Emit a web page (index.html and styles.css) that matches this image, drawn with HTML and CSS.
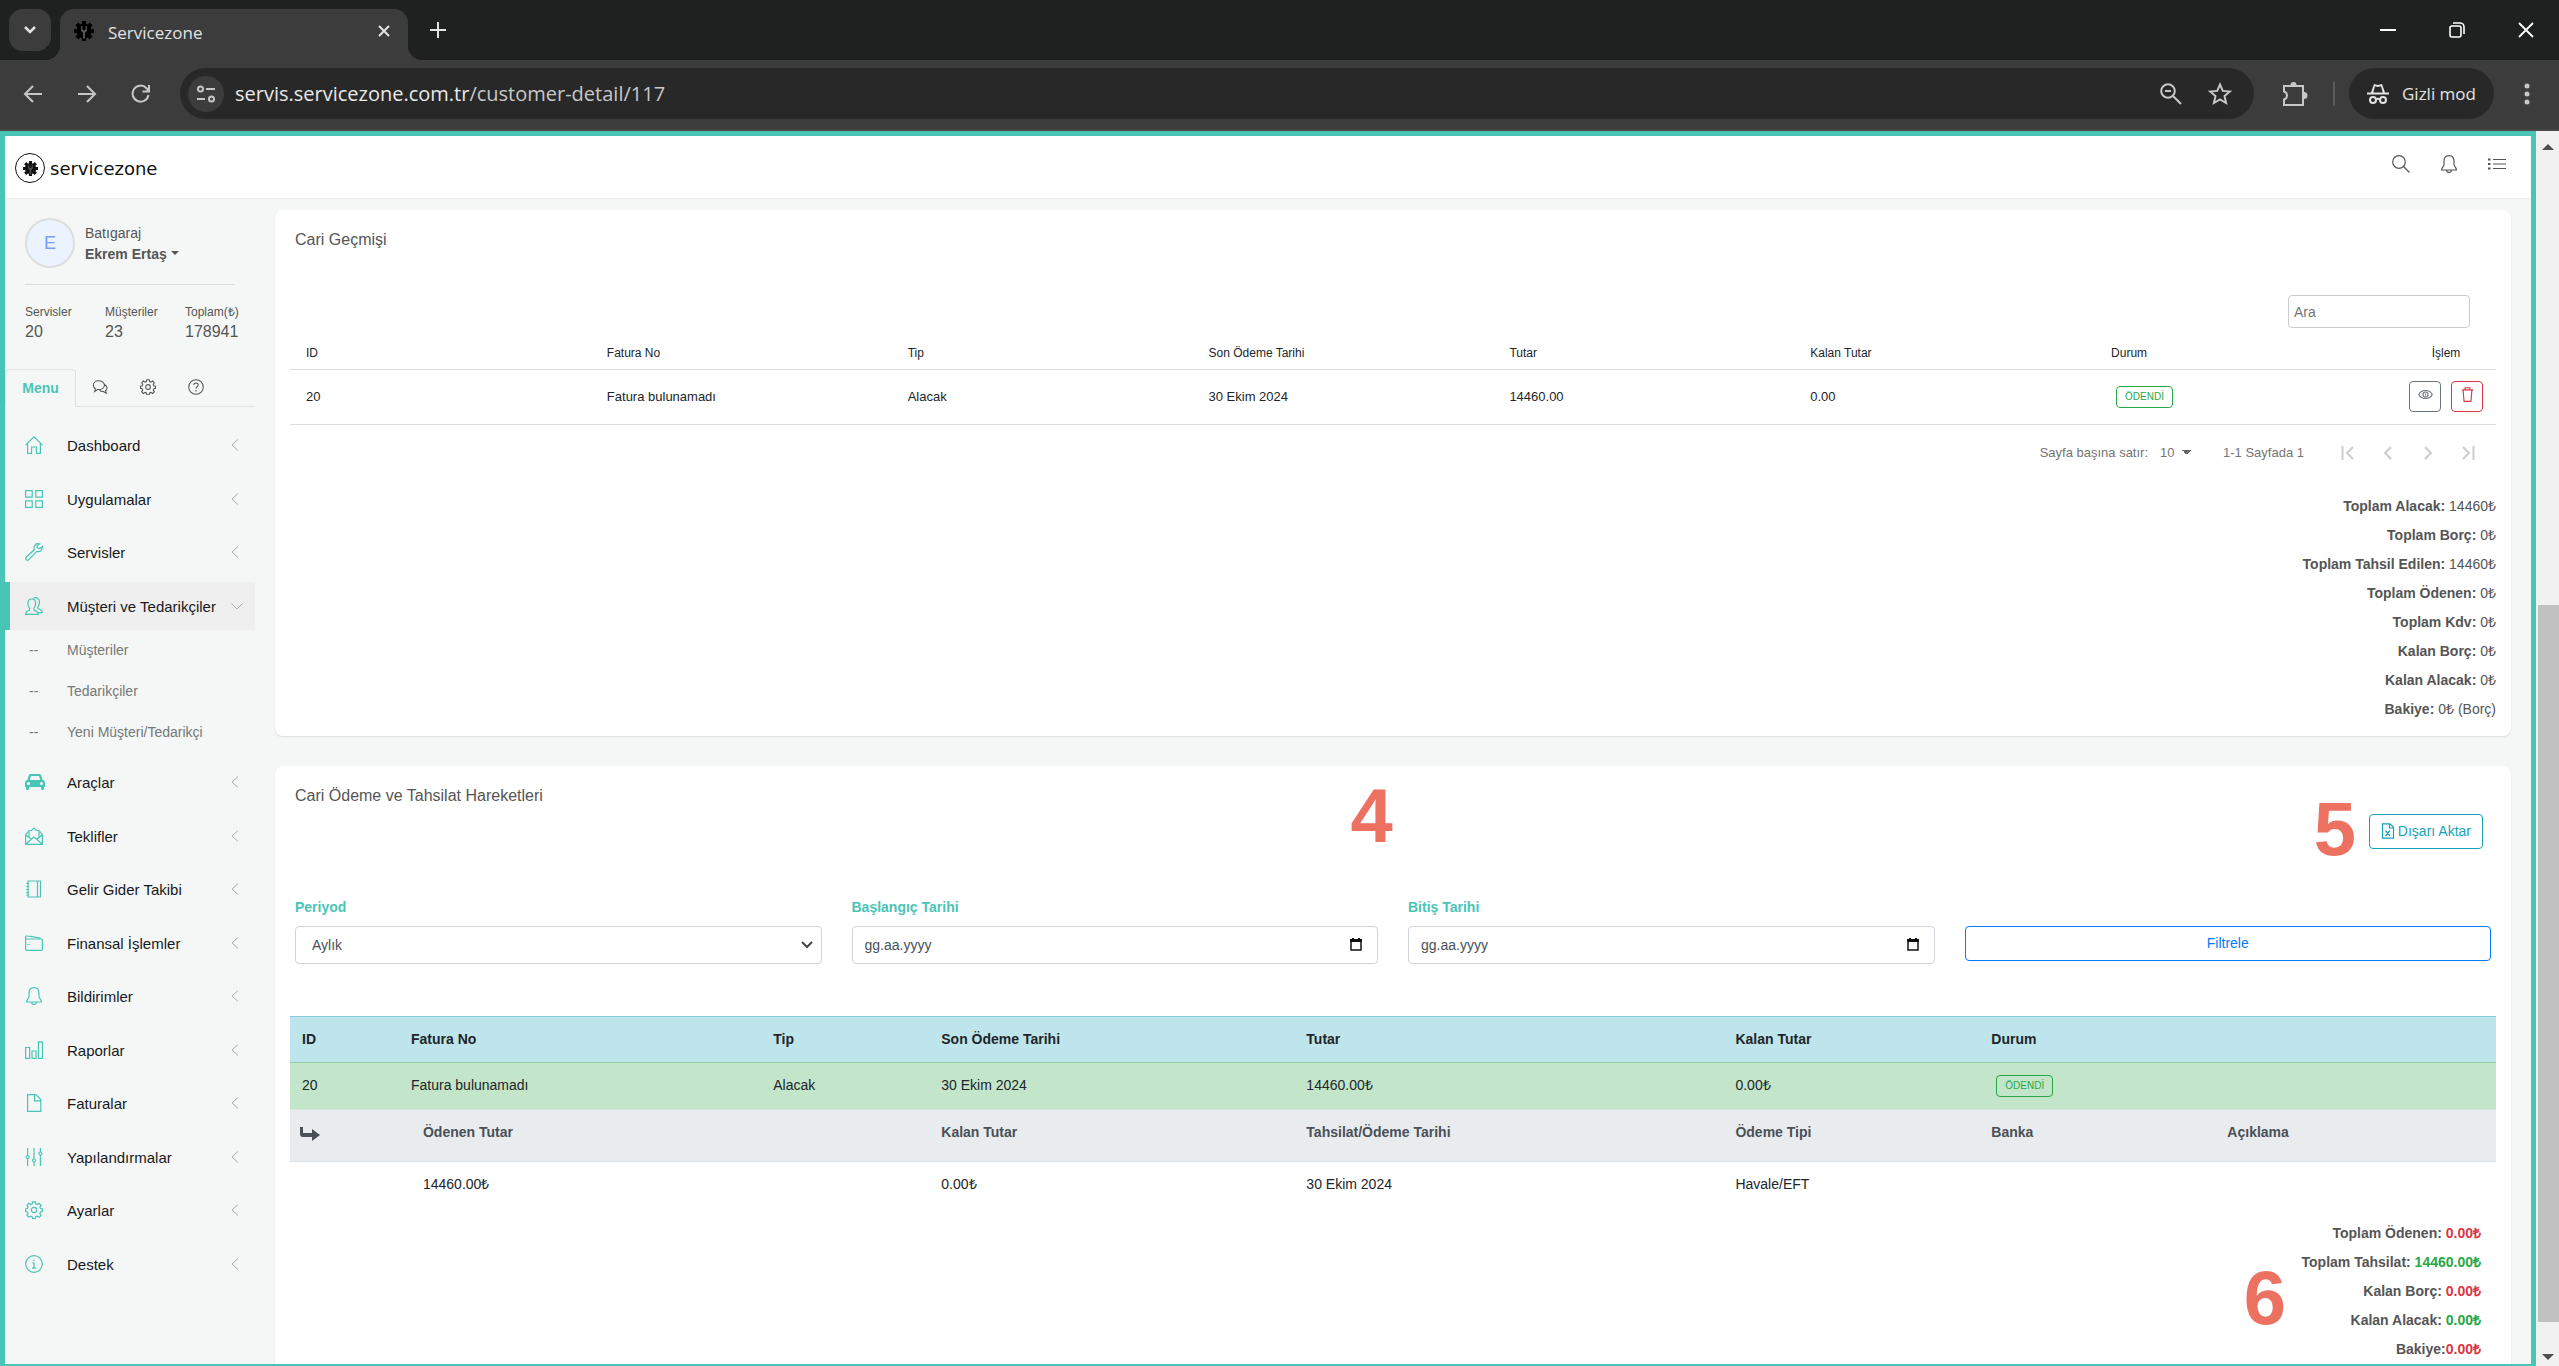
FILE: index.html
```html
<!DOCTYPE html>
<html lang="tr">
<head>
  <meta charset="UTF-8">
  <meta name="viewport" content="width=device-width, initial-scale=1">
  <title>Servicezone</title>
  <link rel="stylesheet" href="styles.css">
</head>
<body>
  <!-- Icon set -->
  <svg class="icon-set" aria-hidden="true">
    <symbol id="i-gearlogo" viewBox="0 0 24 24">
      <g fill="currentColor">
        <circle cx="12" cy="12" r="9"/>
        <path d="M9.500 0h5v24h-5zM0 9.500h24v5H0z"/>
        <path d="M9.500 0h5v24h-5zM0 9.500h24v5H0z" transform="rotate(45 12 12)"/>
      </g>
      <path class="logo-wrench" d="M8.500 6v6l2.300 2.200V21h2.400v-6.800l2.300-2.200V6h-1.500v4L12 11.500 10 10V6z"/>
    </symbol>
    <symbol id="i-search" viewBox="0 0 18 18"><circle cx="7" cy="7" r="6.300"/><path d="M11.500 11.500l6 6"/></symbol>
    <symbol id="i-bell" viewBox="0 0 18 18"><path d="M9 .6C5.800.6 4 2.800 4 6v3.500c0 2-2.400 3-2.400 5.500h14.800c0-2.500-2.400-3.500-2.400-5.500V6C14 2.800 12.200.6 9 .6zM6.600 15.200c0 3 4.800 3 4.800 0"/></symbol>
    <symbol id="i-list" viewBox="0 0 18 18"><path d="M5 4.500h13M5 9h13M5 13.500h13"/><path stroke-width="2" d="M0 4.500h2.500M0 9h2.500M0 13.500h2.500"/></symbol>
    <symbol id="i-bubbles" viewBox="0 0 18 18"><path d="M7.500 2C4 2 1.500 4.300 1.500 7c0 1.700.9 3.100 2.300 4L3 14l3.200-2.200c4.500.6 7.800-1.600 7.800-4.800 0-2.700-2.800-5-6.500-5zM14 6.200c3.600 1.700 3.600 5.300 1.200 6.900l.8 2.700-3.200-1.800c-1.700.3-3.300-.2-4.300-1.500"/></symbol>
    <symbol id="i-gear" viewBox="0 0 18 18"><circle cx="9" cy="9" r="2.700"/><path d="M7.600.8h2.800l.4 2.100 1.500.6 1.800-1.200 2 2-1.200 1.800.6 1.500 1.900.4v2.500l-1.900.5-.6 1.500 1.200 1.800-2 2-1.800-1.200-1.500.6-.4 2H7.600l-.4-2-1.500-.6-1.800 1.200-2-2 1.200-1.800-.6-1.500L.6 10.500V8l1.900-.4.6-1.500-1.200-1.800 2-2 1.800 1.200 1.500-.6z"/></symbol>
    <symbol id="i-help" viewBox="0 0 18 18"><circle cx="9" cy="9" r="8.200"/><path d="M6.500 6.800c0-3.200 5-3 5 0 0 1.900-2.500 1.800-2.500 4M9 12.500v1.500"/></symbol>
    <symbol id="i-home" viewBox="0 0 18 18"><path d="M.6 9.200L9 .8l8.400 8.400M2.600 7.500v9.900h4V11h4.800v6.400h4V7.500"/></symbol>
    <symbol id="i-grid" viewBox="0 0 18 18"><path d="M.6.6h6.600v6.600H.6zM10.800.6h6.600v6.600h-6.600zM.6 10.800h6.600v6.600H.6zM10.800 10.800h6.600v6.600h-6.600z"/></symbol>
    <symbol id="i-wrench" viewBox="0 0 18 18"><path d="M14.700 1c-2-.8-4.200-.2-5.200 1.800-.7 1.300-.6 2.600-.1 3.700L1 14.500c-.7 1 0 2.700 1.500 2.800.6 0 1-.3 1.300-.6l8-8.300c2.800.9 5.900-1.200 5.600-4.900l-2.700 2.200-2.200-.6-.6-2z"/></symbol>
    <symbol id="i-users" viewBox="0 0 18 18"><path d="M.6 17.400c0-3 2-3.500 4-4.400v-1.500C3.300 10 2.800 8 2.900 5.800 3 3.500 4.500 2 6.700 2s3.800 1.500 3.900 3.800c.1 2.200-.5 4.200-1.700 5.700V13c2 .9 4.300 1.400 4.300 4.400zM8.300 1.200c3.400-1.600 6.300.5 6.200 3.800 0 2.300-.5 3.700-1.700 5.200v1.300c2.400 1 4.600 1.200 4.600 4.200h-4.600"/></symbol>
    <symbol id="i-car" viewBox="0 0 20 16"><path fill="currentColor" stroke="none" fill-rule="evenodd" d="M6 0h8c1.300 0 2 .6 2.400 1.700L17.500 6C19.200 6.300 20 7.400 20 9v4h-1v1.500c0 2-3 2-3 0V13H4v1.500c0 2-3 2-3 0V13H0V9c0-1.600.8-2.700 2.500-3l1.100-4.300C4 .6 4.700 0 6 0zM6 2L4.800 6h10.400L14 2zM3.500 8a1.500 1.500 0 100 3 1.500 1.500 0 000-3zM16.500 8a1.500 1.500 0 100 3 1.500 1.500 0 000-3z"/></symbol>
    <symbol id="i-mail" viewBox="0 0 18 18"><path d="M4 5H2.600L.6 8v9.400h16.800V8l-2-3H14M.8 8L6 12M17.200 8L12 12M1 17l5.500-5 2.500-1.800 2.500 1.800 5.500 5M4 10.500V3.500h2.600L9 1l2.400 2.500H14v7"/></symbol>
    <symbol id="i-book" viewBox="0 0 18 18"><path d="M3 1h12.500v16H3zM12.500 1v16M1.200 3.500h3M1.200 6.500h3M1.200 9.500h3M1.200 12.500h3M1.200 15h3"/></symbol>
    <symbol id="i-wallet" viewBox="0 0 18 18"><path d="M.6 5h15.600c.8 0 1.200.5 1.200 1.200v9c0 .8-.4 1.200-1.200 1.200H1.800c-.8 0-1.200-.4-1.200-1.200V3.400c0-1.200.7-1.700 1.600-1.500L15 4v1M2.500 10.500h2"/></symbol>
    <symbol id="i-chart" viewBox="0 0 18 18"><path d="M.6 6.500h4v10.900h-4zM7 10h4v7.400H7zM13.400.8h4v16.600h-4z"/></symbol>
    <symbol id="i-doc" viewBox="0 0 18 18"><path d="M2.600.6h8.400l4.800 5v11.800H2.600zM9.500.8v6h6"/></symbol>
    <symbol id="i-sliders" viewBox="0 0 18 18"><path d="M2.600 0v7.500M2.600 10.500V18M9 0v11M9 14v4M15.400 0v4M15.400 7v11"/><circle cx="2.600" cy="9" r="1.500"/><circle cx="9" cy="12.500" r="1.500"/><circle cx="15.400" cy="5.500" r="1.500"/></symbol>
    <symbol id="i-info" viewBox="0 0 18 18"><circle cx="9" cy="9" r="8.300"/><path d="M7.300 8H9v5M7 13.200h4M9 4.500V6"/></symbol>
    <symbol id="i-left" viewBox="0 0 12 12"><path d="M7 .5L1 6l6 5.500"/></symbol>
    <symbol id="i-down" viewBox="0 0 12 12"><path d="M.5 3.500L6 9l5.500-5.500"/></symbol>
    <symbol id="i-eye" viewBox="0 0 16 16"><path d="M.8 8c2.700-5.700 11.700-5.700 14.400 0-2.700 5.700-11.700 5.700-14.400 0z"/><circle cx="8" cy="8" r="2.700"/><path d="M8 7v2"/></symbol>
    <symbol id="i-trash" viewBox="0 0 16 16"><path d="M2 3h12M5.500 3V.8h5V3M3.300 3l1 12.300h7.400L12.700 3"/></symbol>
    <symbol id="i-excel" viewBox="0 0 14 16"><path d="M1.500.8h7.500l3.500 3.500v10.900h-11zM8.500 1v4h4M4.500 7.500l4.500 5.500M9 7.500L4.500 13"/></symbol>
  </svg>

  <div class="tabstrip">
    <button class="tab-search" aria-label="Sekmelerde ara"><svg width="14" height="10" viewBox="0 0 14 10"><path d="M2 2l5 5 5-5" fill="none" stroke="currentColor" stroke-width="2.500"/></svg></button>
    <div class="tab">
      <svg class="favicon" width="20" height="20"><use href="#i-gearlogo"/></svg>
      <span>Servicezone</span>
      <button class="tab-close" aria-label="Kapat"><svg width="12" height="12" viewBox="0 0 12 12"><path d="M1 1l10 10M11 1L1 11" stroke="currentColor" stroke-width="2"/></svg></button>
    </div>
    <button class="tab-new" aria-label="Yeni sekme"><svg width="16" height="16" viewBox="0 0 16 16"><path d="M8 0v16M0 8h16" stroke="currentColor" stroke-width="2"/></svg></button>
    <div class="window-buttons">
      <button aria-label="Küçült"><svg width="16" height="16" viewBox="0 0 16 16"><path d="M0 8h16" stroke="currentColor" stroke-width="2"/></svg></button>
      <button aria-label="Geri yükle"><svg width="16" height="16" viewBox="0 0 16 16"><g fill="none" stroke="currentColor" stroke-width="1.600"><rect x="1" y="4" width="11" height="11" rx="2"/><path d="M4 1h7a4 4 0 014 4v7"/></g></svg></button>
      <button aria-label="Kapat"><svg width="16" height="16" viewBox="0 0 16 16"><path d="M1 1l14 14M15 1L1 15" stroke="currentColor" stroke-width="1.800"/></svg></button>
    </div>
  </div>

  <div class="toolbar">
    <button class="nav" aria-label="Geri"><svg width="20" height="20" viewBox="0 0 20 20"><path d="M19 10H2M10 2l-8 8 8 8"/></svg></button>
    <button class="nav" aria-label="İleri"><svg width="20" height="20" viewBox="0 0 20 20"><path d="M1 10h17M10 2l8 8-8 8"/></svg></button>
    <button class="nav" aria-label="Yenile"><svg width="20" height="20" viewBox="0 0 20 20"><path d="M17.500 11a8 8 0 11-2-6.800L18 7M18 1v6.500h-6.500"/></svg></button>
    <div class="omnibox">
      <button class="site-info" aria-label="Site bilgileri"><svg width="20" height="20" viewBox="0 0 20 20"><circle cx="4.500" cy="5" r="2.500"/><path d="M10 5h9M1 15h8"/><circle cx="15.500" cy="15" r="2.500"/></svg></button>
      <span class="url">servis.servicezone.com.tr<span class="url-path">/customer-detail/117</span></span>
      <button class="nav" aria-label="Yakınlaştırma"><svg width="22" height="22" viewBox="0 0 22 22"><circle cx="8" cy="8" r="6.800"/><path d="M13 13l8 8M5 8h6"/></svg></button>
      <button class="nav" aria-label="Yer işareti"><svg width="24" height="24" viewBox="0 0 24 24"><path d="M12 2.500l2.800 6.400 7 .6-5.300 4.600 1.600 6.900-6.100-3.700L5.900 21l1.600-6.900L2.200 9.500l7-.6z"/></svg></button>
    </div>
    <button class="nav" aria-label="Uzantılar"><svg width="26" height="26" viewBox="0 0 26 26"><path d="M2 5h19v19H2v-5.500c4-1 4-7 0-8z"/><path fill="currentColor" stroke="none" d="M8.500 4a3 3 0 016 0zM22 11a3.500 3.500 0 010 7z"/></svg></button>
    <span class="divider"></span>
    <button class="incognito"><svg width="22" height="22" viewBox="0 0 22 22"><path fill="currentColor" stroke="none" fill-rule="evenodd" d="M7 1l4 1 4-1 3 8.500h4v2H0v-2h4zM8 3.300L6.300 9.500h9.400L14 3.300l-3 .8z"/><circle cx="6" cy="17" r="3"/><circle cx="16" cy="17" r="3"/><path d="M9 16.500q2-1.500 4 0"/></svg>Gizli mod</button>
    <button class="nav" aria-label="Menü"><svg width="6" height="22" viewBox="0 0 6 22"><g fill="currentColor" stroke="none"><circle cx="3" cy="3" r="2.500"/><circle cx="3" cy="11" r="2.500"/><circle cx="3" cy="19" r="2.500"/></g></svg></button>
  </div>

  <div class="viewport">
    <div class="page">
      <header class="topbar">
        <a href="#" class="brand"><span class="brand-mark"><svg width="15" height="15"><use href="#i-gearlogo"/></svg></span>servicezone</a>
        <div class="topbar-icons">
          <button aria-label="Ara"><svg class="icon"><use href="#i-search"/></svg></button>
          <button aria-label="Bildirimler"><svg class="icon"><use href="#i-bell"/></svg></button>
          <button aria-label="Liste"><svg class="icon"><use href="#i-list"/></svg></button>
        </div>
      </header>

      <div class="layout">
        <aside class="sidebar">
          <div class="user">
            <div class="avatar">E</div>
            <div class="user-name">Batıgaraj<br><a href="#"><strong>Ekrem Ertaş</strong><i class="caret"></i></a></div>
          </div>
          <hr>
          <div class="stats">
            <div><small>Servisler</small>20</div>
            <div><small>Müşteriler</small>23</div>
            <div><small>Toplam(₺)</small>178941</div>
          </div>
          <div class="side-tabs">
            <a href="#" class="active">Menu</a>
            <a href="#" aria-label="Sohbet"><svg class="icon"><use href="#i-bubbles"/></svg></a>
            <a href="#" aria-label="Ayarlar"><svg class="icon"><use href="#i-gear"/></svg></a>
            <a href="#" aria-label="Yardım"><svg class="icon"><use href="#i-help"/></svg></a>
          </div>
          <ul class="menu">
            <li><a href="#"><svg class="icon"><use href="#i-home"/></svg>Dashboard<svg class="arrow"><use href="#i-left"/></svg></a></li>
            <li><a href="#"><svg class="icon"><use href="#i-grid"/></svg>Uygulamalar<svg class="arrow"><use href="#i-left"/></svg></a></li>
            <li><a href="#"><svg class="icon"><use href="#i-wrench"/></svg>Servisler<svg class="arrow"><use href="#i-left"/></svg></a></li>
            <li class="active"><a href="#"><svg class="icon"><use href="#i-users"/></svg>Müşteri ve Tedarikçiler<svg class="arrow"><use href="#i-down"/></svg></a>
              <ul>
                <li><a href="#">Müşteriler</a></li>
                <li><a href="#">Tedarikçiler</a></li>
                <li><a href="#">Yeni Müşteri/Tedarikçi</a></li>
              </ul>
            </li>
            <li><a href="#"><svg class="icon icon-car"><use href="#i-car"/></svg>Araçlar<svg class="arrow"><use href="#i-left"/></svg></a></li>
            <li><a href="#"><svg class="icon"><use href="#i-mail"/></svg>Teklifler<svg class="arrow"><use href="#i-left"/></svg></a></li>
            <li><a href="#"><svg class="icon"><use href="#i-book"/></svg>Gelir Gider Takibi<svg class="arrow"><use href="#i-left"/></svg></a></li>
            <li><a href="#"><svg class="icon"><use href="#i-wallet"/></svg>Finansal İşlemler<svg class="arrow"><use href="#i-left"/></svg></a></li>
            <li><a href="#"><svg class="icon"><use href="#i-bell"/></svg>Bildirimler<svg class="arrow"><use href="#i-left"/></svg></a></li>
            <li><a href="#"><svg class="icon"><use href="#i-chart"/></svg>Raporlar<svg class="arrow"><use href="#i-left"/></svg></a></li>
            <li><a href="#"><svg class="icon"><use href="#i-doc"/></svg>Faturalar<svg class="arrow"><use href="#i-left"/></svg></a></li>
            <li><a href="#"><svg class="icon"><use href="#i-sliders"/></svg>Yapılandırmalar<svg class="arrow"><use href="#i-left"/></svg></a></li>
            <li><a href="#"><svg class="icon"><use href="#i-gear"/></svg>Ayarlar<svg class="arrow"><use href="#i-left"/></svg></a></li>
            <li><a href="#"><svg class="icon"><use href="#i-info"/></svg>Destek<svg class="arrow"><use href="#i-left"/></svg></a></li>
          </ul>
        </aside>

        <main class="content">
          <section class="card">
            <h2>Cari Geçmişi</h2>
            <div class="search-row"><input type="text" placeholder="Ara" aria-label="Ara"></div>
            <table class="history">
              <thead>
                <tr><th>ID</th><th>Fatura No</th><th>Tip</th><th>Son Ödeme Tarihi</th><th>Tutar</th><th>Kalan Tutar</th><th>Durum</th><th class="actions">İşlem</th></tr>
              </thead>
              <tbody>
                <tr>
                  <td>20</td><td>Fatura bulunamadı</td><td>Alacak</td><td>30 Ekim 2024</td><td>14460.00</td><td>0.00</td>
                  <td><span class="badge">ÖDENDİ</span></td>
                  <td class="actions">
                    <div class="action-buttons">
                      <button class="btn-view" aria-label="Görüntüle"><svg class="icon"><use href="#i-eye"/></svg></button>
                      <button class="btn-delete" aria-label="Sil"><svg class="icon"><use href="#i-trash"/></svg></button>
                    </div>
                  </td>
                </tr>
              </tbody>
            </table>
            <div class="pagination">
              <label for="rows">Sayfa başına satır:</label>
              <select id="rows"><option>10</option></select>
              <span>1-1 Sayfada 1</span>
              <div class="pager">
                <button aria-label="İlk sayfa"><svg viewBox="0 0 14 14"><path d="M1.500 0v14M12 1L6 7l6 6"/></svg></button>
                <button aria-label="Önceki sayfa"><svg viewBox="0 0 14 14"><path d="M10 1L4 7l6 6"/></svg></button>
                <button aria-label="Sonraki sayfa"><svg viewBox="0 0 14 14"><path d="M4 1l6 6-6 6"/></svg></button>
                <button aria-label="Son sayfa"><svg viewBox="0 0 14 14"><path d="M12.500 0v14M2 1l6 6-6 6"/></svg></button>
              </div>
            </div>
            <div class="totals">
              <p><b>Toplam Alacak:</b> 14460₺</p>
              <p><b>Toplam Borç:</b> 0₺</p>
              <p><b>Toplam Tahsil Edilen:</b> 14460₺</p>
              <p><b>Toplam Ödenen:</b> 0₺</p>
              <p><b>Toplam Kdv:</b> 0₺</p>
              <p><b>Kalan Borç:</b> 0₺</p>
              <p><b>Kalan Alacak:</b> 0₺</p>
              <p><b>Bakiye:</b> 0₺ (Borç)</p>
            </div>
          </section>

          <section class="card">
            <h2>Cari Ödeme ve Tahsilat Hareketleri</h2>
            <span class="mark mark-4">4</span>
            <span class="mark mark-5">5</span>
            <span class="mark mark-6">6</span>
            <div class="export-row"><button class="btn-export"><svg class="icon"><use href="#i-excel"/></svg>Dışarı Aktar</button></div>
            <form class="filters">
              <div>
                <label for="period">Periyod</label>
                <select id="period"><option>Aylık</option></select>
              </div>
              <div>
                <label for="start">Başlangıç Tarihi</label>
                <input id="start" class="date" type="text" placeholder="gg.aa.yyyy">
              </div>
              <div>
                <label for="end">Bitiş Tarihi</label>
                <input id="end" class="date" type="text" placeholder="gg.aa.yyyy">
              </div>
              <button type="button" class="btn-filter">Filtrele</button>
            </form>
            <table class="movements">
              <colgroup><col class="c-id"><col class="c-no"><col class="c-type"><col class="c-due"><col class="c-amount"><col class="c-left"><col class="c-state"><col></colgroup>
              <thead>
                <tr class="info"><th>ID</th><th>Fatura No</th><th>Tip</th><th>Son Ödeme Tarihi</th><th>Tutar</th><th>Kalan Tutar</th><th>Durum</th><th></th></tr>
              </thead>
              <tbody>
                <tr class="success"><td>20</td><td>Fatura bulunamadı</td><td>Alacak</td><td>30 Ekim 2024</td><td>14460.00₺</td><td>0.00₺</td><td><span class="badge">ÖDENDİ</span></td><td></td></tr>
                <tr class="sub">
                  <th><svg class="turn" viewBox="0 0 20 14"><path fill="currentColor" d="M0 0h3v6h9V2l8 6-8 6v-4H3Q0 10 0 7z"/></svg></th>
                  <th class="indent">Ödenen Tutar</th><th></th><th>Kalan Tutar</th><th>Tahsilat/Ödeme Tarihi</th><th>Ödeme Tipi</th><th>Banka</th><th>Açıklama</th>
                </tr>
                <tr><td></td><td class="indent">14460.00₺</td><td></td><td>0.00₺</td><td>30 Ekim 2024</td><td>Havale/EFT</td><td></td><td></td></tr>
              </tbody>
            </table>
            <div class="totals totals-bold">
              <p>Toplam Ödenen: <span class="red">0.00₺</span></p>
              <p>Toplam Tahsilat: <span class="green">14460.00₺</span></p>
              <p>Kalan Borç: <span class="red">0.00₺</span></p>
              <p>Kalan Alacak: <span class="green">0.00₺</span></p>
              <p>Bakiye:<span class="red">0.00₺</span></p>
            </div>
          </section>
        </main>
      </div>
    </div>
    <div class="scrollbar">
      <i class="up"></i>
      <div class="thumb"></div>
      <i class="dn"></i>
    </div>
  </div>
</body>
</html>
```
FILE: styles.css
```css
* {
  box-sizing: border-box;
}

body {
  margin: 0;
  height: 100vh;
  display: flex;
  flex-direction: column;
  overflow: hidden;
  font-family: "Liberation Sans", Arial, sans-serif;
  font-size: 14px;
  color: #555;
  background: #f4f7f6;
}

button {
  font: inherit;
  color: inherit;
  background: none;
  border: none;
  padding: 0;
  cursor: pointer;
}

a {
  color: inherit;
  text-decoration: none;
}

svg {
  display: block;
  flex: none;
}

.icon-set {
  position: absolute;
  width: 0;
  height: 0;
}

.icon {
  width: 18px;
  height: 18px;
  fill: none;
  stroke: currentColor;
  stroke-width: 1.2;
}

/* Browser frame */
.tabstrip,
.toolbar {
  flex: none;
  display: flex;
  align-items: center;
  font-family: "Open Sans", "Noto Sans", sans-serif;
  color: #e3e3e3;
}

.tabstrip {
  height: 60px;
  padding-left: 9px;
  background: #1f2120;
}

.tab-search {
  display: grid;
  place-items: center;
  width: 42px;
  height: 42px;
  border-radius: 14px;
  background: #3c3c3c;
}

.tab {
  position: relative;
  align-self: flex-end;
  display: flex;
  align-items: center;
  width: 348px;
  height: 51px;
  margin-left: 9px;
  padding: 0 18px 8px 14px;
  border-radius: 14px 14px 0 0;
  background: #3c3c3c;
  font-size: 17px;
}

/* flared feet of the active tab */
.tab::before,
.tab::after {
  content: "";
  position: absolute;
  bottom: 0;
  width: 14px;
  height: 14px;
}

.tab::before {
  left: -14px;
  background: radial-gradient(circle at 0 0, #1f2120 14px, #3c3c3c 14px);
}

.tab::after {
  right: -14px;
  background: radial-gradient(circle at 100% 0, #1f2120 14px, #3c3c3c 14px);
}

.favicon {
  margin-right: 14px;
  color: #000;
}

.favicon + span {
  padding-top: 3px;
}

.logo-wrench {
  fill: #555;
}

.tab-close {
  margin-left: auto;
}

.tab-new {
  margin-left: 22px;
}

.window-buttons {
  display: flex;
  gap: 53px;
  margin-left: auto;
  padding-right: 25px;
  color: #fff;
}

.toolbar {
  height: 71px;
  padding: 0 29px 2px 23px;
  background: #3c3c3c;
  border-bottom: 2px solid #474747;
  color: #c7c7c7;
}

.toolbar svg {
  fill: none;
  stroke: currentColor;
  stroke-width: 2;
}

.toolbar > .nav + .nav {
  margin-left: 34px;
}

.omnibox {
  flex: 1;
  display: flex;
  align-items: center;
  height: 51px;
  margin: 0 28px 0 29px;
  padding: 0 22px 0 8px;
  border-radius: 26px;
  background: #282828;
}

.site-info {
  display: grid;
  place-items: center;
  width: 36px;
  height: 36px;
  margin-right: 11px;
  border-radius: 50%;
  background: #3c3c3c;
}

.url {
  flex: 1;
  font-size: 20px;
  color: #e8e8e8;
}

.url-path {
  color: #c7c7c7;
}

.omnibox .nav {
  margin-left: 26px;
}

.divider {
  width: 2px;
  height: 24px;
  margin: 0 14px 0 25px;
  background: #5c5c5c;
}

.incognito {
  display: flex;
  align-items: center;
  gap: 13px;
  height: 51px;
  margin-right: 30px;
  padding: 0 18px;
  border-radius: 26px;
  background: #282828;
  color: #e3e3e3;
  font-size: 17px;
}

/* Page */
.viewport {
  flex: 1;
  min-height: 0;
  display: flex;
}

.page {
  flex: 1;
  min-width: 0;
  display: flex;
  flex-direction: column;
  overflow: hidden;
  border: 5px solid #49c5b6;
  border-bottom-width: 2px;
}

.topbar {
  flex: none;
  display: flex;
  align-items: center;
  justify-content: space-between;
  height: 63px;
  padding: 0 25px 0 10px;
  background: #fff;
  border-bottom: 1px solid #e9ecec;
}

.brand {
  display: flex;
  align-items: center;
  gap: 5px;
  padding-top: 2px;
  font-family: "DejaVu Sans", sans-serif;
  font-size: 18px;
  color: #111;
}

.brand-mark {
  display: grid;
  place-items: center;
  width: 30px;
  height: 30px;
  border: 1px solid #111;
  border-radius: 50%;
}

.brand-mark .logo-wrench {
  fill: #fff;
}

.topbar-icons {
  display: flex;
  gap: 30px;
  padding-bottom: 6px;
}

.layout {
  flex: 1;
  min-height: 0;
  display: flex;
}

.sidebar {
  flex: none;
  width: 250px;
  padding-top: 19px;
}

.user {
  display: flex;
  align-items: center;
  gap: 10px;
  padding-left: 20px;
  line-height: 21px;
}

.user-name {
  padding-top: 2px;
}

.avatar {
  width: 50px;
  height: 50px;
  border: 2px solid #ddd;
  border-radius: 50%;
  background: #ebf3ff;
  color: #7f9cf5;
  font-size: 18px;
  line-height: 46px;
  text-align: center;
}

.caret {
  display: inline-block;
  margin-left: 4px;
  border: 4px solid transparent;
  border-top-color: currentColor;
  border-bottom: none;
  vertical-align: 4px;
}

.sidebar hr {
  height: 1px;
  margin: 16px 20px 18px;
  border: none;
  background: #d8dbda;
}

.stats {
  display: grid;
  grid-template-columns: repeat(3, 80px);
  padding-left: 20px;
  font-size: 16px;
  line-height: 22px;
}

.stats small {
  display: block;
  font-size: 12px;
  line-height: 18px;
}

.side-tabs {
  display: flex;
  height: 38px;
  margin-top: 26px;
  border-bottom: 1px solid #dee2e6;
}

.side-tabs a {
  display: grid;
  place-items: center;
  width: 48px;
  padding-bottom: 2px;
}

.side-tabs .icon {
  width: 16px;
  height: 16px;
}

.side-tabs .active {
  width: 71px;
  height: 38px;
  border: 1px solid #dee2e6;
  border-bottom: none;
  border-radius: 4px 4px 0 0;
  background: #f4f7f6;
  color: #49c5b6;
  font-weight: bold;
}

.menu,
.menu ul {
  margin: 0;
  padding: 0;
  list-style: none;
}

.menu {
  margin-top: 14px;
  font-size: 15px;
  color: #17191c;
}

.menu > li {
  margin-bottom: 6px;
}

.menu > li:nth-child(even) {
  margin-bottom: 5px;
}

.menu > li > a {
  display: flex;
  align-items: center;
  height: 48px;
  padding: 0 12px 0 20px;
}

.menu .icon {
  margin-right: 24px;
  color: #49c5b6;
}

.menu .icon-car {
  width: 20px;
  margin-right: 22px;
}

.menu .arrow {
  width: 12px;
  height: 12px;
  margin-left: auto;
  fill: none;
  stroke: #aaa;
}

.menu > .active > a {
  padding-left: 15px;
  border-left: 5px solid #49c5b6;
  background: #efefef;
}

.menu ul a {
  display: block;
  padding-left: 24px;
  font-size: 14px;
  line-height: 41px;
  color: #777;
}

.menu ul a::before {
  content: "--";
  display: inline-block;
  width: 38px;
}

.content {
  flex: 1;
  min-width: 0;
  padding: 11px 20px 0;
}

/* Cards */
.card {
  position: relative;
  margin-bottom: 30px;
  padding: 20px 15px 12px;
  border-radius: 8px;
  background: #fff;
  box-shadow: 0 1px 2px rgba(0, 0, 0, 0.1);
}

.card h2 {
  margin: 0 5px;
  font-size: 16px;
  font-weight: normal;
  line-height: 20px;
}

.search-row {
  display: flex;
  justify-content: flex-end;
  padding: 45px 26px 10px 0;
}

.search-row input {
  width: 182px;
  height: 33px;
  padding: 0 5px;
  border: 1px solid #ccc;
  border-radius: 4px;
  font: inherit;
}

input::placeholder {
  color: #757575;
  opacity: 1;
}

table {
  width: 100%;
  border-collapse: collapse;
  table-layout: fixed;
  text-align: left;
  color: #212529;
}

.history th,
.history td {
  padding: 0 16px;
  border-bottom: 1px solid #ddd;
}

.history th {
  height: 31px;
  font-size: 12px;
  font-weight: normal;
}

.history td {
  height: 55px;
  font-size: 13px;
}

.history .actions {
  width: 100px;
  padding: 0;
  text-align: center;
}

.badge {
  display: inline-block;
  margin-left: 5px;
  padding: 0 8px;
  border: 1px solid #28a745;
  border-radius: 4px;
  color: #28a745;
  font-size: 10px;
  line-height: 20px;
  vertical-align: middle;
}

.action-buttons {
  display: flex;
  justify-content: center;
  gap: 10px;
}

.action-buttons button {
  display: grid;
  place-items: center;
  width: 32px;
  height: 31px;
  padding-bottom: 4px;
  border: 1px solid;
  border-radius: 4px;
}

.action-buttons .icon {
  width: 15px;
  height: 15px;
}

.btn-view {
  color: #6c757d;
}

.btn-delete {
  color: #dc3545;
}

.pagination {
  display: flex;
  align-items: center;
  justify-content: flex-end;
  height: 56px;
  padding-right: 8px;
  font-size: 13px;
  color: #757575;
}

.pagination select {
  width: 34px;
  margin: 0 29px 0 12px;
  padding: 0;
  border: none;
  appearance: none;
  background: linear-gradient(to bottom right, #666 50%, transparent 50%) 27px 5px / 5px 5px no-repeat, linear-gradient(to bottom left, #666 50%, transparent 50%) 22px 5px / 5px 5px no-repeat;
  color: inherit;
  font: inherit;
}

.pager {
  display: flex;
  margin-left: 24px;
}

.pager button {
  display: grid;
  place-items: center;
  width: 40px;
}

.pager svg {
  width: 14px;
  height: 14px;
  fill: none;
  stroke: #ccc;
  stroke-width: 2;
}

.totals {
  padding-top: 11px;
  text-align: right;
  line-height: 29px;
}

.totals p {
  margin: 0;
}

.totals-bold {
  padding: 12px 15px 0;
  font-weight: bold;
}

.red {
  color: #dc3545;
}

.green {
  color: #28a745;
}

/* Step numbers over the second card */
.mark {
  position: absolute;
  color: #ed7161;
  font-size: 76px;
  font-weight: bold;
  line-height: 72px;
}

.mark-4 {
  top: 14px;
  left: 48.1%;
}

.mark-5 {
  top: 27px;
  right: 155px;
}

.mark-6 {
  top: 496px;
  right: 225px;
}

.export-row {
  display: flex;
  justify-content: flex-end;
  padding: 8px 13px 0 0;
}

.btn-export {
  display: flex;
  align-items: center;
  gap: 3px;
  height: 35px;
  padding: 0 11px;
  border: 1px solid #17a2b8;
  border-radius: 4px;
  color: #17a2b8;
}

.btn-export .icon {
  width: 14px;
  height: 16px;
}

.filters {
  display: grid;
  grid-template-columns: repeat(4, 1fr);
  gap: 30px;
  margin: 48px 5px 52px;
}

.filters label {
  display: block;
  margin-bottom: 9px;
  color: #49c5b6;
  font-weight: bold;
  line-height: 20px;
}

.filters select,
.filters input {
  display: block;
  width: 100%;
  height: 38px;
  padding: 0 12px;
  border: 1px solid #ced4da;
  border-radius: 4px;
  background: #fff;
  color: #495057;
  font: inherit;
}

.filters select {
  padding: 0 16px;
  appearance: none;
  background: url("data:image/svg+xml,%3Csvg xmlns='http://www.w3.org/2000/svg' viewBox='0 0 12 8'%3E%3Cpath d='M1 1l5 5 5-5' fill='none' stroke='%23444' stroke-width='2'/%3E%3C/svg%3E") right 8px center / 12px 8px no-repeat;
}

.filters .date {
  background: url("data:image/svg+xml,%3Csvg xmlns='http://www.w3.org/2000/svg' viewBox='0 0 12 13'%3E%3Cpath d='M1 2h10v10H1z' fill='none' stroke='%23111' stroke-width='1.500'/%3E%3Cpath d='M0 1h12v3H0zM2 0h2v2H2zM8 0h2v2H8z' fill='%23111'/%3E%3C/svg%3E") right 15px center / 12px 13px no-repeat;
}

.filters input::placeholder {
  color: #495057;
}

.btn-filter {
  height: 35px;
  margin-top: 29px;
  border: 1px solid #007bff;
  border-radius: 4px;
  color: #007bff;
}

.movements th,
.movements td {
  height: 46px;
  padding: 12px 12px 0;
  border-top: 1px solid #dee2e6;
  line-height: 21px;
  vertical-align: top;
}

.movements .badge {
  vertical-align: top;
}

.movements .indent {
  padding-left: 24px;
}

.c-id { width: 4.94%; }
.c-no { width: 16.42%; }
.c-type { width: 7.62%; }
.c-due { width: 16.55%; }
.c-amount { width: 19.45%; }
.c-left { width: 11.6%; }
.c-state { width: 10.7%; }

.movements .info th {
  background: #bee5eb;
  border-color: #86cfda;
}

.movements .success td {
  height: 47px;
  background: #c3e6cb;
  border-color: #8fd19e;
}

.movements .sub th {
  height: 52px;
  background: #e9ecef;
  border-color: #dee2e6;
  color: #495057;
}

.turn {
  width: 20px;
  height: 14px;
  margin: 5px 0 0 -2px;
}

/* Scrollbar */
.scrollbar {
  display: grid;
  grid-template-rows: 19px 455fr 717fr 25fr 19px;
  justify-items: center;
  width: 23px;
  background: #f1f1f1;
}

.scrollbar .thumb {
  grid-row: 3;
  width: 21px;
  margin-left: 2px;
  background: #c1c1c1;
}

.scrollbar .up,
.scrollbar .dn {
  align-self: center;
  border: 6px solid transparent;
}

.scrollbar .up {
  align-self: end;
  border-top: none;
  border-bottom-color: #505050;
}

.scrollbar .dn {
  grid-row: 5;
  border-bottom: none;
  border-top-color: #505050;
}
```
